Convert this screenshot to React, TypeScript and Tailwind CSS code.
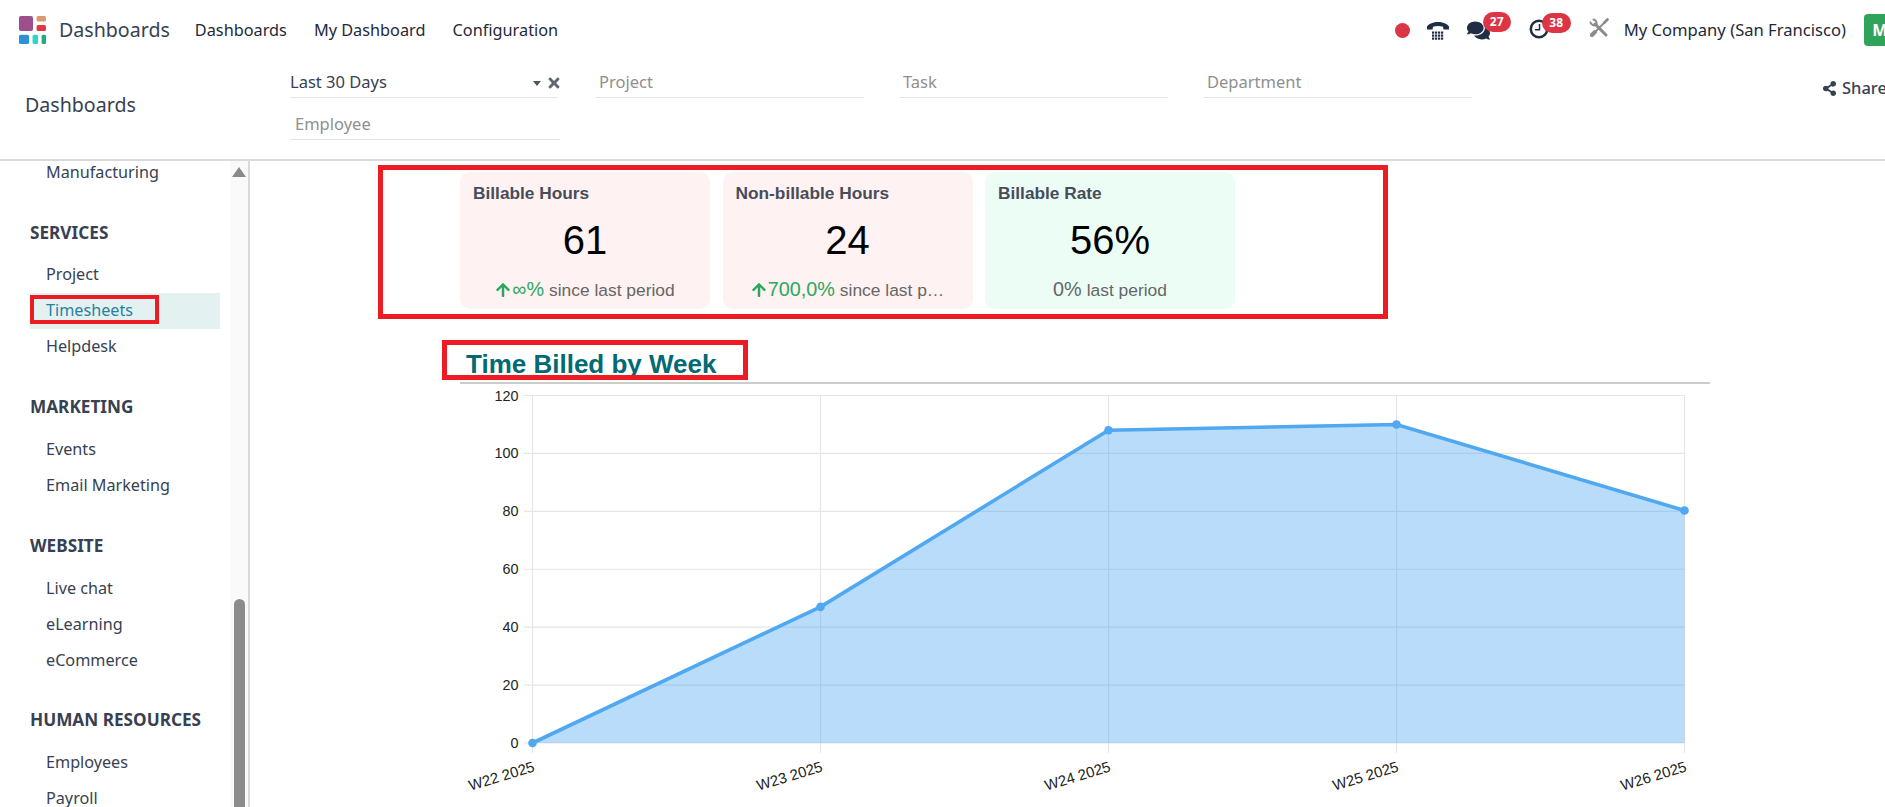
import { FaArrowUp, FaComments, FaShareAlt, FaTimes } from 'react-icons/fa';

const sections = [
  { title: 'SERVICES', items: ['Project', 'Timesheets', 'Helpdesk'] },
  { title: 'MARKETING', items: ['Events', 'Email Marketing'] },
  { title: 'WEBSITE', items: ['Live chat', 'eLearning', 'eCommerce'] },
  { title: 'HUMAN RESOURCES', items: ['Employees', 'Payroll'] },
];

const weeks = [
  { label: 'W22 2025', x: 532.5, value: 0 },
  { label: 'W23 2025', x: 820.5, value: 47 },
  { label: 'W24 2025', x: 1108.5, value: 108 },
  { label: 'W25 2025', x: 1396.5, value: 110 },
  { label: 'W26 2025', x: 1684.5, value: 80.3 },
];

const yFor = (v: number) => 743 - (v / 120) * 347.5;

function Logo() {
  return (
    <svg width="28" height="28" viewBox="0 0 28 28">
      <rect x="0" y="0" width="14" height="15" rx="2" fill="#9c4f8a" />
      <rect x="17.6" y="0" width="9.4" height="5.5" rx="1.5" fill="#d99a70" />
      <rect x="17.6" y="9" width="9.4" height="6" rx="1.5" fill="#e0393f" />
      <rect x="0" y="18.7" width="10" height="9.3" rx="1.5" fill="#2f8fd8" />
      <rect x="13.6" y="18.7" width="5.5" height="9.3" rx="1.5" fill="#2fd4c8" />
      <rect x="22.6" y="18.7" width="4.5" height="9.3" rx="1.5" fill="#27a884" />
    </svg>
  );
}

function PhoneIcon() {
  const cols = [6, 9, 12, 15];
  const rows = [11.5, 14.5, 17.5];
  return (
    <svg width="24" height="20" viewBox="0 0 24 20" fill="#1f2d45">
      <path d="M1 6.5C5 .5 19 .5 23 6.5L23 9.5 17.5 9.5 17 6.8C14 5.8 10 5.8 7 6.8L6.5 9.5 1 9.5Z" />
      {rows.map((y) => cols.map((x) => <rect key={`${x}-${y}`} x={x} y={y} width="2.2" height="2.2" />))}
    </svg>
  );
}

function ClockIcon() {
  return (
    <svg width="20" height="20" viewBox="0 0 20 20" fill="none" stroke="#1f2d45">
      <circle cx="10" cy="10" r="8.2" strokeWidth="2.5" />
      <path d="M10.5 5V10.8H6" strokeWidth="1.5" />
    </svg>
  );
}

function ToolsIcon() {
  return (
    <svg width="20" height="20" viewBox="0 0 20 20" fill="none" stroke="#8a8a8a" strokeLinecap="round">
      <path d="M6 6L17 17" strokeWidth="3" />
      <path d="M1.5 4.5A4 4 0 0 0 7.5 6.5 4 4 0 0 0 4.5 1.5" strokeWidth="2" />
      <path d="M16 4L5 15" strokeWidth="1.8" />
      <path d="M6 14L3 17" strokeWidth="4" />
      <path d="M18.5 1.5L15.5 4.5" strokeWidth="2.6" />
    </svg>
  );
}

function Badge({ children, className }: { children: string; className: string }) {
  return (
    <span className={`absolute flex h-[20px] items-center justify-center rounded-full bg-[#dc3545] text-[12px] font-bold text-white ${className}`}>
      {children}
    </span>
  );
}

function Filter({ label, value, wide }: { label: string; value?: boolean; wide?: boolean }) {
  return (
    <div className="flex h-[42px] items-end">
      <div
        className={`flex h-[30px] items-center border-b border-[#e3e5e8] text-[16.5px] ${wide ? 'w-[270px] pl-[5px]' : 'w-[268px]'} ${
          value ? 'text-[#374151]' : 'text-[#8f8f8f]'
        } ${!value && !wide ? 'pl-[3px]' : ''}`}
      >
        {label}
      </div>
    </div>
  );
}

function Sidebar() {
  return (
    <aside className="flex h-full w-[250px] shrink-0 overflow-hidden border-r-2 border-[#d8dadd]">
      <nav className="-mt-[7px] w-[230px] shrink-0 pl-[30px] pr-[10px] text-[16.2px] text-[#374151]">
        <div className="flex h-9 items-center pl-[16px]">Manufacturing</div>
        {sections.map((section) => (
          <div key={section.title} className="mt-[24.6px]">
            <div className="flex h-9 items-center text-[17.2px] font-bold whitespace-nowrap">{section.title}</div>
            <ul className="mt-[6px]">
              {section.items.map((item) => (
                <li
                  key={item}
                  className={`relative flex h-9 items-center pl-[16px] ${item === 'Timesheets' ? 'bg-[#e3f2f1] text-[#2a7f9f]' : ''}`}
                >
                  {item}
                  {item === 'Timesheets' && (
                    <span className="absolute left-0 top-[2px] h-[29px] w-[129px] border-[4px] border-[#ed1c24]" />
                  )}
                </li>
              ))}
            </ul>
          </div>
        ))}
      </nav>
      <div className="flex w-[18px] shrink-0 flex-col items-center bg-[#fafafa]">
        <span className="mt-[6px] h-0 w-0 border-x-[7px] border-b-[10px] border-x-transparent border-b-[#8a8a8a]" />
        <span className="mt-auto h-[208px] w-[11px] rounded-t-full bg-[#8c8c8c]" />
      </div>
    </aside>
  );
}

function Card({ title, value, delta, lead, note, bg }: { title: string; value: string; delta?: string; lead?: string; note: string; bg: string }) {
  return (
    <div className={`flex h-[137px] w-[250px] flex-col rounded-[10px] px-[13px] pt-[11px] ${bg}`}>
      <div className="flex h-[22px] items-center text-[17.3px] font-bold text-[#474c5a]">{title}</div>
      <div className="mt-[11px] flex h-[48px] items-center justify-center text-[40px] text-black">{value}</div>
      <div className="mt-[13px] flex h-[26px] items-center justify-center whitespace-nowrap text-[17.4px] text-[#666666]">
        {delta && (
          <span className="mr-[5px] flex items-center text-[19.8px] text-[#2aa85f]">
            <FaArrowUp className="mr-[1px] text-[16px]" />
            {delta}
          </span>
        )}
        {lead && <span className="mr-[5px] text-[19.8px]">{lead}</span>}
        <span className="truncate">{note}</span>
      </div>
    </div>
  );
}

function Chart() {
  const line = weeks.map((w) => `${w.x},${yFor(w.value)}`).join(' ');
  return (
    <svg width="1250" height="420" viewBox="460 385 1250 420" className="mt-[1px] block font-['Liberation_Sans',sans-serif]">
      {[0, 20, 40, 60, 80, 100, 120].map((v) => (
        <g key={v}>
          <line x1="524" x2="1684.5" y1={yFor(v)} y2={yFor(v)} stroke="#e5e5e5" strokeWidth="1.2" />
          <text x="518.5" y={yFor(v) + 5} textAnchor="end" fontSize="14.4" fill="#222">{v}</text>
        </g>
      ))}
      {weeks.map((w) => (
        <g key={w.label}>
          <line x1={w.x} x2={w.x} y1="395.5" y2="753" stroke="#e5e5e5" strokeWidth="1.2" />
          <text transform={`translate(${w.x + 3},771) rotate(-17)`} textAnchor="end" fontSize="14.9" fill="#222">{w.label}</text>
        </g>
      ))}
      <polygon points={`532.5,743 ${line} 1684.5,743`} fill="#4ea8f0" fillOpacity="0.4" />
      <polyline points={line} fill="none" stroke="#4fa8f0" strokeWidth="3.6" />
      {weeks.map((w) => (
        <circle key={w.label} cx={w.x} cy={yFor(w.value)} r="4.3" fill="#4fa8f0" />
      ))}
    </svg>
  );
}

export default function App() {
  return (
    <div className="flex h-screen w-[1885px] flex-col overflow-hidden bg-white font-['Noto_Sans',sans-serif]">
      <header className="h-[161px] shrink-0 border-b-2 border-[#d8dadd]">
        <div className="flex h-[60px] items-center text-[16.3px] text-[#1f2937]">
          <div className="ml-[19px]"><Logo /></div>
          <span className="ml-[12px] text-[19.6px] text-[#374151]">Dashboards</span>
          <a className="ml-[25px]">Dashboards</a>
          <a className="ml-[27px]">My Dashboard</a>
          <a className="ml-[27px]">Configuration</a>
          <div className="ml-auto flex items-center">
            <span className="h-[15px] w-[15px] rounded-full bg-[#dc3545]" />
            <span className="ml-[16px]"><PhoneIcon /></span>
            <span className="relative ml-[17px]">
              <FaComments className="text-[23px] text-[#1f2d45]" />
              <Badge className="-top-[7px] left-[16px] w-[28px]">27</Badge>
            </span>
            <span className="relative ml-[39px] -mt-[2px]">
              <ClockIcon />
              <Badge className="-top-[6px] left-[13px] w-[29px]">38</Badge>
            </span>
            <span className="ml-[40px] -mt-[5px]"><ToolsIcon /></span>
            <span className="ml-[15px] text-[16.6px]">My Company (San Francisco)</span>
            <span className="-mr-[11px] ml-[18px] flex h-[32px] w-[32px] items-center justify-center rounded-[4px] bg-[#2fa35a] font-bold text-white">M</span>
          </div>
        </div>
        <div className="flex h-[100px] items-start">
          <div className="mt-[30px] w-[290px] shrink-0 pl-[25px] text-[19.6px] text-[#374151]">Dashboards</div>
          <div className="relative -mt-[4.5px] grid w-[1218px] shrink-0 grid-cols-[306px_304px_304px_304px]">
            <Filter label="Last 30 Days" value />
            <Filter label="Project" />
            <Filter label="Task" />
            <Filter label="Department" />
            <Filter label="Employee" wide />
            <span className="absolute left-[243px] top-[25px] h-0 w-0 border-x-[4px] border-t-[5px] border-x-transparent border-t-[#4b5563]" />
            <FaTimes className="absolute left-[256px] top-[19px] text-[16px] text-[#5f6773]" />
          </div>
          <div className="ml-[314px] mt-[16px] flex shrink-0 items-center gap-[5px] text-[16.5px] font-medium whitespace-nowrap text-[#374151]">
            <FaShareAlt className="text-[15px]" />
            Share
          </div>
        </div>
      </header>
      <div className="flex min-h-0 flex-1">
        <Sidebar />
        <main className="min-w-0 flex-1 pl-[210px] pt-[11px] font-['Liberation_Sans',sans-serif]">
          <div className="relative flex w-[775px] gap-[12.5px]">
            <Card title="Billable Hours" value="61" delta="∞%" note="since last period" bg="bg-[#fff2f2]" />
            <Card title="Non-billable Hours" value="24" delta="700,0%" note="since last p…" bg="bg-[#fff2f2]" />
            <Card title="Billable Rate" value="56%" lead="0%" note="last period" bg="bg-[#ecfdf5]" />
            <span className="absolute -left-[82px] -top-[7px] h-[154px] w-[1010px] border-[5px] border-[#ed1c24]" />
          </div>
          <div className="relative mt-[40px] h-[35px] w-[1250px] border-b-2 border-[#cccccc] pl-[6px] text-[26px] leading-[30px] font-bold whitespace-nowrap text-[#016a72]">
            Time Billed by Week
            <span className="absolute -left-[18px] -top-[9px] h-[40px] w-[306px] border-[5px] border-[#ed1c24]" />
          </div>
          <Chart />
        </main>
      </div>
    </div>
  );
}
